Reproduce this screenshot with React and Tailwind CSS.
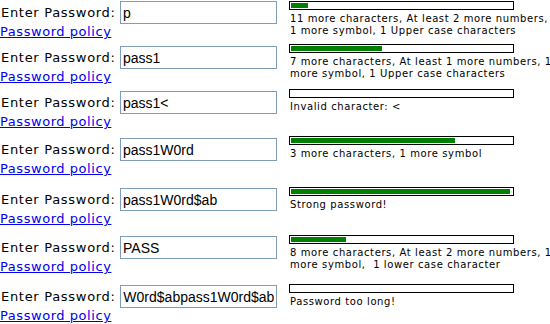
import React, { useEffect, useRef } from 'react'

const ROWS = [
  { value: 'p', fill: 17, msg: ['11 more characters, At least 2 more numbers,', '1 more symbol, 1 Upper case characters'], h: 43, off: 0 },
  { value: 'pass1', fill: 91, msg: ['7 more characters, At least 1 more numbers, 1', 'more symbol, 1 Upper case characters'], h: 45, off: 2 },
  { value: 'pass1<', fill: 0, msg: ['Invalid character: <'], h: 47, off: 2 },
  { value: 'pass1W0rd', fill: 164, msg: ['3 more characters, 1 more symbol'], h: 51, off: 2 },
  { value: 'pass1W0rd$ab', fill: 219, msg: ['Strong password!'], h: 48, off: 1 },
  { value: 'PASS', fill: 55, msg: ['8 more characters, At least 2 more numbers, 1', 'more symbol,  1 lower case character'], h: 49, off: 1 },
  { value: 'pass1W0rd$abpass1W0rd$ab', fill: 0, msg: ['Password too long!'], h: 40, off: 1, scroll: true },
]

function PwInput({ value, scroll }) {
  const ref = useRef(null)
  useEffect(() => {
    if (scroll && ref.current) ref.current.scrollLeft = ref.current.scrollWidth
  }, [scroll])
  return (
    <input ref={ref} readOnly value={value}
      className="w-[157px] h-[23px] border border-[#7f9db9] bg-white px-[2px] text-[14px] tracking-normal text-black outline-none font-['Liberation_Sans',Arial,sans-serif]" />
  )
}

function Row({ row }) {
  return (
    <div className="flex items-start" style={{ height: row.h }}>
      <div className="w-[289px] shrink-0 font-['DejaVu_Sans',Verdana,sans-serif] text-[13px] leading-[16px] tracking-[0.7px]">
        <div className="flex items-center" style={{ marginTop: row.off }}>
          <span className="w-[120px] shrink-0 pl-[1px] text-black whitespace-nowrap">Enter Password:</span>
          <PwInput value={row.value} scroll={row.scroll} />
        </div>
        <a href="#" className="text-[#0000ee] underline whitespace-nowrap tracking-[0.55px]">Password policy</a>
      </div>
      <div className="min-w-0 font-['DejaVu_Sans',Verdana,sans-serif] text-[10px] leading-[12px] tracking-[0.6px] text-black">
        <div className="w-[225px] h-[9px] border border-black p-[1px] bg-white">
          {row.fill > 0 && <div className="h-full bg-[#008000]" style={{ width: row.fill }} />}
        </div>
        <div className="mt-[3px] pl-[1px] whitespace-nowrap">
          {row.msg.map((m, i) => <div key={i} className="whitespace-pre">{m}</div>)}
        </div>
      </div>
    </div>
  )
}

export default function App() {
  return (
    <div className="w-[550px] h-[324px] bg-white pt-[1px] overflow-hidden">
      {ROWS.map((r, i) => <Row key={i} row={r} />)}
    </div>
  )
}
